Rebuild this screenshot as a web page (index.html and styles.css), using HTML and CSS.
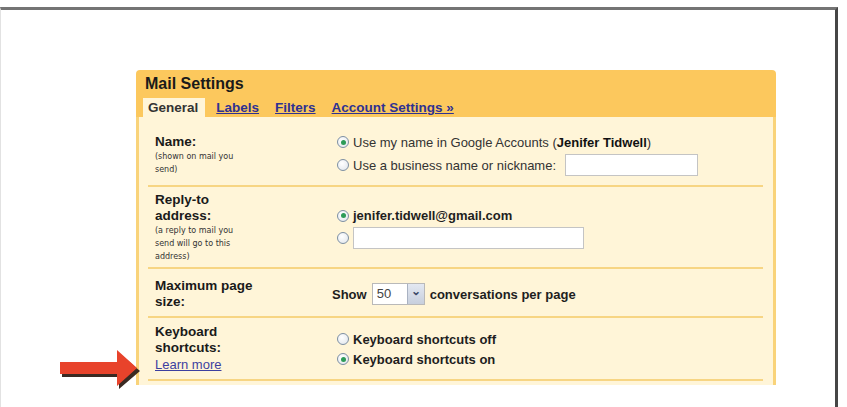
FILE: index.html
```html
<!DOCTYPE html>
<html lang="en">

<head>
    <meta charset="UTF-8">
    <meta name="viewport" content="width=device-width, initial-scale=1.0">
    <title>Mail Settings</title>
    <link rel="stylesheet" href="styles.css">
</head>

<body>
    <div class="frame">

        <!-- pointer to the "Learn more" link -->
        <svg class="arrow" width="82" height="40" viewBox="0 0 82 40">
            <polygon points="2,15 59,15 59,3 80,21 59,39 59,27 2,27" fill="#3a2a22" />
            <polygon points="0,12 57,12 57,0 77,18 57,36 57,24 0,24" fill="#e8432b" />
        </svg>

        <section class="settings">
            <div class="head">
                <h2>Mail Settings</h2>
                <ul class="tabs">
                    <li class="current">General</li>
                    <li><a href="#">Labels</a></li>
                    <li><a href="#">Filters</a></li>
                    <li><a href="#">Account Settings &raquo;</a></li>
                </ul>
            </div>

            <div class="body">
                <div class="row row-name">
                    <div class="label">
                        <h4>Name:</h4>
                        <p>(shown on mail you<br>send)</p>
                    </div>
                    <div class="options">
                        <div class="opt"><span class="radio on"></span>Use my name in Google Accounts (<b>Jenifer Tidwell</b>)</div>
                        <div class="opt"><span class="radio"></span>Use a business name or nickname: <span class="field short"></span></div>
                    </div>
                </div>

                <div class="row row-reply">
                    <div class="label">
                        <h4>Reply-to<br>address:</h4>
                        <p>(a reply to mail you<br>send will go to this<br>address)</p>
                    </div>
                    <div class="options">
                        <div class="opt strong"><span class="radio on"></span>jenifer.tidwell@gmail.com</div>
                        <div class="opt"><span class="radio"></span><span class="field long"></span></div>
                    </div>
                </div>

                <div class="row row-size">
                    <div class="label">
                        <h4>Maximum page<br>size:</h4>
                    </div>
                    <div class="options">
                        <div class="show">Show <span class="select"><span class="val">50</span><span class="drop">&#8964;</span></span> conversations per page</div>
                    </div>
                </div>

                <div class="row row-keys">
                    <div class="label">
                        <h4>Keyboard<br>shortcuts:</h4>
                        <a href="#" class="more">Learn more</a>
                    </div>
                    <div class="options">
                        <div class="opt strong"><span class="radio"></span>Keyboard shortcuts off</div>
                        <div class="opt strong"><span class="radio on"></span>Keyboard shortcuts on</div>
                    </div>
                </div>
            </div>
        </section>
    </div>
</body>

</html>
```

FILE: styles.css
```css
* {
    margin: 0;
    padding: 0;
    box-sizing: border-box;
}

body {
    background: #fff;
    font-family: "Liberation Sans", Arial, sans-serif;
    color: #1e1e1e;
}

.frame {
    position: relative;
    width: 838px;
    height: 400px;
    margin-top: 7px;
    padding: 60px 0 0 135px;
    border-top: 3px solid #747474;
    border-right: 3px solid #464646;
    border-left: 1px solid #e2e2e2;
}

.arrow {
    position: absolute;
    left: 59px;
    top: 340px;
}

.settings {
    width: 640px;
}

.head {
    background: #fcc85d;
    border-radius: 4px 4px 0 0;
    padding: 0 0 0 7px;
}

.head h2 {
    font-size: 16px;
    height: 28px;
    line-height: 27px;
    padding-left: 2px;
    color: #1a1a1a;
}

.tabs {
    list-style: none;
    display: flex;
    gap: 16px;
    height: 19px;
    line-height: 19px;
    font-size: 13.5px;
    font-weight: bold;
}

.tabs li.current {
    background: #fff5d8;
    padding: 0 7px 0 5px;
    margin-right: -5px;
    color: #333;
}

.tabs a {
    color: #2e3192;
    text-decoration: underline;
}

.body {
    background: #fff5d8;
    border-left: 3px solid #f9d37a;
    border-right: 3px solid #f9d37a;
    padding: 2px 10px 4px 9px;
}

.row {
    display: grid;
    grid-template-columns: 177px 1fr;
    align-items: center;
    padding: 6px 7px;
    border-bottom: 2px solid #f7d583;
}

.row-name {
    padding-top: 13px;
    padding-bottom: 7px;
}

.row-reply {
    padding-top: 5px;
    padding-bottom: 4px;
}

.row-size {
    padding-top: 9px;
    padding-bottom: 6px;
}

.row-keys {
    padding-top: 6px;
    padding-bottom: 5px;
}

.label h4 {
    font-size: 13.5px;
    line-height: 16px;
    color: #1a1a1a;
}

.label p {
    font-family: "DejaVu Sans", Verdana, sans-serif;
    font-size: 8px;
    line-height: 13px;
    color: #333;
}

.label .more {
    display: block;
    font-size: 13px;
    line-height: 18px;
    color: #3d3fa0;
    text-decoration: underline;
}

.options {
    padding-left: 5px;
    font-size: 13px;
}

.opt {
    display: flex;
    align-items: center;
    height: 20px;
    color: #333;
}

.opt b {
    color: #111;
}

.opt.strong {
    font-weight: bold;
    color: #1e1e1e;
}

.radio {
    width: 12px;
    height: 12px;
    margin-right: 4px;
    border: 1px solid #7d8fa3;
    border-radius: 50%;
    background: radial-gradient(circle at 40% 35%, #fff, #dfe4ea);
    display: flex;
    align-items: center;
    justify-content: center;
}

.radio.on::after {
    content: "";
    width: 5px;
    height: 5px;
    border-radius: 50%;
    background: #2d9b57;
}

.field {
    display: inline-block;
    height: 22px;
    background: #fff;
    border: 1px solid #c4c4c4;
}

.field.short {
    width: 133px;
    margin-left: 9px;
}

.field.long {
    width: 231px;
}

.row-name .opt:last-child {
    height: 26px;
}

.row-reply .opt:last-child {
    height: 24px;
}

.show {
    margin-left: -5px;
    font-weight: bold;
    display: flex;
    align-items: center;
    gap: 5px;
}

.select {
    display: flex;
    width: 53px;
    height: 22px;
    background: #fff;
    border: 1px solid #b9b9b9;
    font-weight: normal;
}

.select .val {
    flex: 1;
    padding-left: 4px;
    line-height: 20px;
    color: #444;
}

.select .drop {
    width: 17px;
    background: linear-gradient(#e3e8f2, #c7cfdd);
    border-left: 1px solid #a9b2c2;
    color: #3b4a66;
    font-size: 12px;
    line-height: 14px;
    text-align: center;
    font-weight: bold;
}
```
